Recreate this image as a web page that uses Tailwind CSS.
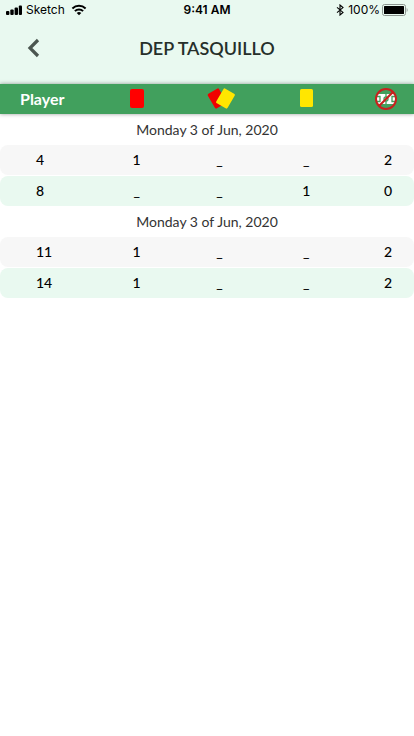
<!DOCTYPE html>
<html lang="en">
<head>
  <meta charset="UTF-8" />
  <meta name="viewport" content="width=device-width, initial-scale=1" />
  <title>Dep Tasquillo</title>
  <script src="https://cdn.jsdelivr.net/npm/@tailwindcss/browser@4"></script>
</head>
<body class="min-h-screen bg-white font-['Lato',sans-serif] text-black">
  <header class="bg-[#e9f9f0]">
    <!-- Status bar -->
    <div class="grid grid-cols-3 items-center h-5 px-1.5 font-['Inter',sans-serif] text-xs">
      <div class="flex items-center gap-1">
        <svg class="w-4 h-3" viewBox="0 0 16 12">
          <rect x="0" y="7" width="3.4" height="4" rx="1" />
          <rect x="4.3" y="5.5" width="3.4" height="5.5" rx="1" />
          <rect x="8.6" y="3.5" width="3.4" height="7.5" rx="1" />
          <rect x="12.8" y="1.5" width="3.2" height="9.5" rx="1" />
        </svg>
        <span>Sketch</span>
        <svg class="w-4 h-3 ml-0.5" viewBox="0 0 16 12" fill="none" stroke="#000" stroke-width="2">
          <path d="M1.4 4.4a9.6 9.6 0 0 1 13.2 0" />
          <path d="M3.9 7.1a5.8 5.8 0 0 1 8.2 0" />
          <path d="M8 11.3L5.7 9a3.3 3.3 0 0 1 4.6 0z" fill="#000" stroke="none" />
        </svg>
      </div>
      <div class="text-center font-semibold">9:41 AM</div>
      <div class="flex items-center justify-end gap-1">
        <svg class="w-2 h-3" viewBox="0 0 8 12" fill="none" stroke="#000" stroke-width="1.1">
          <path d="M1 3.4l6 5L4 11V1l3 2.6-6 5" />
        </svg>
        <span class="-mr-0.5">100%</span>
        <svg class="w-[26px] h-3" viewBox="0 0 26 12">
          <rect x="0.5" y="0.5" width="23" height="11" rx="2" fill="none" stroke="#8d9691" />
          <rect x="2" y="2" width="20" height="8" rx="0.5" />
          <path d="M24.7 4v4c1.2-.6 1.2-3.4 0-4z" fill="#8d9691" />
        </svg>
      </div>
    </div>

    <!-- Title bar -->
    <div class="grid grid-cols-[40px_1fr_40px] items-center h-16 px-3 pb-2">
      <button type="button" aria-label="Back" class="flex items-center justify-center h-10">
        <svg class="w-5 h-5" viewBox="0 0 20 20" fill="none" stroke="#4b5650" stroke-width="3.2">
          <path d="M16 2L8 10l8 8" />
        </svg>
      </button>
      <h1 class="text-center text-lg font-semibold text-[#262f2a]">DEP TASQUILLO</h1>
    </div>
  </header>

  <table class="-mt-px w-full table-fixed border-separate border-spacing-x-0 border-spacing-y-px text-center text-sm font-medium">
    <thead>
      <tr class="h-[30px] bg-[#41a05d] shadow-[0_0_4px_rgba(0,0,0,0.4)]">
        <th scope="col" class="w-[23%] pl-5 text-left text-base font-bold text-white">Player</th>
        <th scope="col" class="w-[20%]">
          <svg class="mx-auto w-4 h-5" viewBox="0 0 16 20" role="img" aria-label="Red cards">
            <rect x="1" y="0" width="14" height="19" rx="2" fill="#f00" />
          </svg>
        </th>
        <th scope="col" class="w-[20%]">
          <svg class="mx-auto w-8 h-6" viewBox="0 0 32 24" role="img" aria-label="Double cards">
            <rect x="7.5" y="3" width="13" height="17" rx="1.5" fill="#f00000" transform="rotate(-30 14 11.5)" />
            <rect x="16" y="3" width="13" height="17" rx="1.5" fill="#ffe600" transform="rotate(30 22.5 11.5)" />
          </svg>
        </th>
        <th scope="col" class="w-[22%]">
          <svg class="mx-auto w-4 h-5" viewBox="0 0 16 20" role="img" aria-label="Yellow cards">
            <rect x="2" y="0" width="13" height="18" rx="1.5" fill="#ffe600" />
          </svg>
        </th>
        <th scope="col" class="w-[15%] pl-1.5">
          <svg class="mx-auto w-6 h-6" viewBox="0 0 24 24" fill="none" role="img" aria-label="Suspended games">
            <rect x="3" y="7" width="18" height="10" fill="#fff" />
            <path d="M3 9.5h3v5H3M21 9.5h-3v5h3M12 7v3M12 14v3" stroke="#41a05d" stroke-width="1.3" />
            <circle cx="12" cy="12" r="2" stroke="#41a05d" stroke-width="1.3" />
            <circle cx="12" cy="12" r="10" stroke="#c9201d" stroke-width="2" />
            <path d="M5 19L19 5" stroke="#c9201d" stroke-width="2.2" />
          </svg>
        </th>
      </tr>
    </thead>
    <tbody>
      <tr class="h-[29px]">
        <th scope="rowgroup" colspan="5" class="font-normal text-[#333]">Monday 3 of Jun, 2020</th>
      </tr>
      <tr class="h-[30px] *:bg-[#f7f7f7]">
        <td class="pl-9 text-left rounded-l-lg">4</td><td>1</td><td>_</td><td>_</td><td class="pl-2.5 rounded-r-lg">2</td>
      </tr>
      <tr class="h-[30px] *:bg-[#e9f9f0]">
        <td class="pl-9 text-left rounded-l-lg">8</td><td>_</td><td>_</td><td>1</td><td class="pl-2.5 rounded-r-lg">0</td>
      </tr>
    </tbody>
    <tbody>
      <tr class="h-[29px]">
        <th scope="rowgroup" colspan="5" class="font-normal text-[#333]">Monday 3 of Jun, 2020</th>
      </tr>
      <tr class="h-[30px] *:bg-[#f7f7f7]">
        <td class="pl-9 text-left rounded-l-lg">11</td><td>1</td><td>_</td><td>_</td><td class="pl-2.5 rounded-r-lg">2</td>
      </tr>
      <tr class="h-[30px] *:bg-[#e9f9f0]">
        <td class="pl-9 text-left rounded-l-lg">14</td><td>1</td><td>_</td><td>_</td><td class="pl-2.5 rounded-r-lg">2</td>
      </tr>
    </tbody>
  </table>
</body>
</html>
